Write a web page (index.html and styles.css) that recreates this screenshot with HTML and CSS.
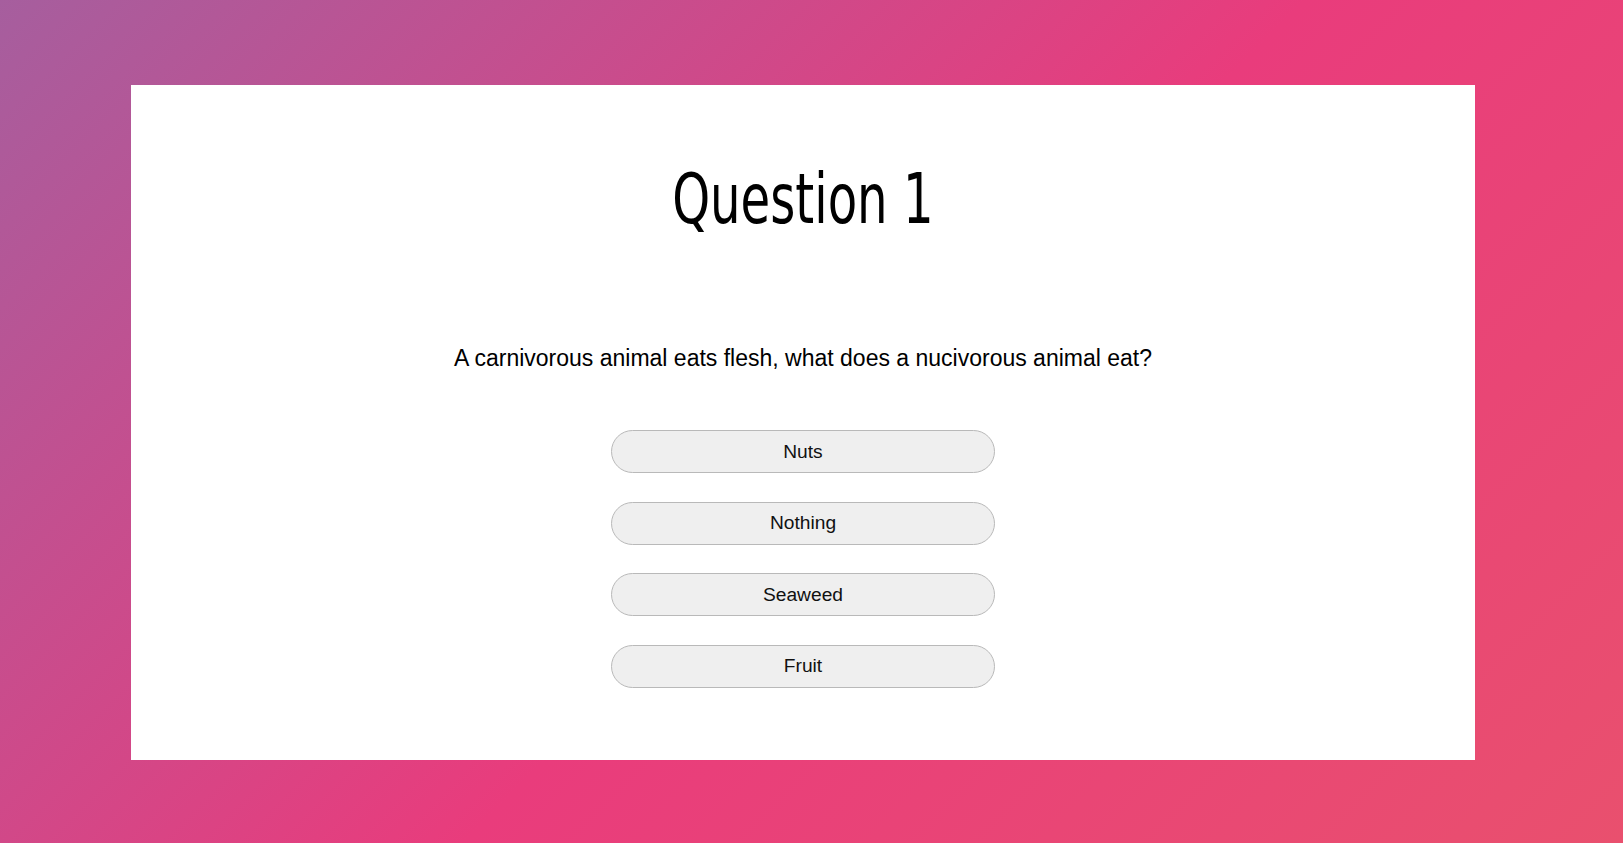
FILE: index.html
```html
<!DOCTYPE html>
<html lang="en">
<head>
<meta charset="utf-8">
<title>Quiz</title>
<link rel="stylesheet" href="styles.css">
</head>
<body>
<main class="quiz">
  <h1 class="quiz-title">Question 1</h1>
  <p class="quiz-question">A carnivorous animal eats flesh, what does a nucivorous animal eat?</p>
  <div class="answers">
    <button class="answer">Nuts</button>
    <button class="answer">Nothing</button>
    <button class="answer">Seaweed</button>
    <button class="answer">Fruit</button>
  </div>
</main>
</body>
</html>
```

FILE: styles.css
```css
html, body {
  margin: 0;
  padding: 0;
  height: 100%;
}

body {
  background: linear-gradient(135deg, #a65e9e 0%, #e93c7c 53%, #e9506e 100%);
  padding: 85px 148px 0 131px;
  box-sizing: border-box;
  overflow: hidden;
}

.quiz {
  background: #ffffff;
  height: 675px;
  box-sizing: border-box;
  padding: 76px 0 0;
  display: flex;
  flex-direction: column;
  align-items: center;
}

.quiz-title {
  margin: 0;
  font-family: "DejaVu Sans Condensed", "DejaVu Sans", sans-serif;
  font-weight: normal;
  font-size: 70px;
  line-height: 76px;
  color: #000;
  transform: scaleX(0.765);
  transform-origin: center;
}

.quiz-question {
  margin: 107px 0 0;
  font-family: "Liberation Sans", Arial, sans-serif;
  font-size: 23px;
  line-height: 28px;
  color: #000;
}

.answers {
  margin-top: 58px;
  display: flex;
  flex-direction: column;
  gap: 28.5px;
}

.answer {
  width: 384px;
  height: 43px;
  box-sizing: border-box;
  background: #efefef;
  border: 1px solid #b9b9b9;
  border-radius: 22px;
  font-family: "Liberation Sans", Arial, sans-serif;
  font-size: 19.2px;
  color: #111;
  padding: 0;
  cursor: pointer;
}
```
